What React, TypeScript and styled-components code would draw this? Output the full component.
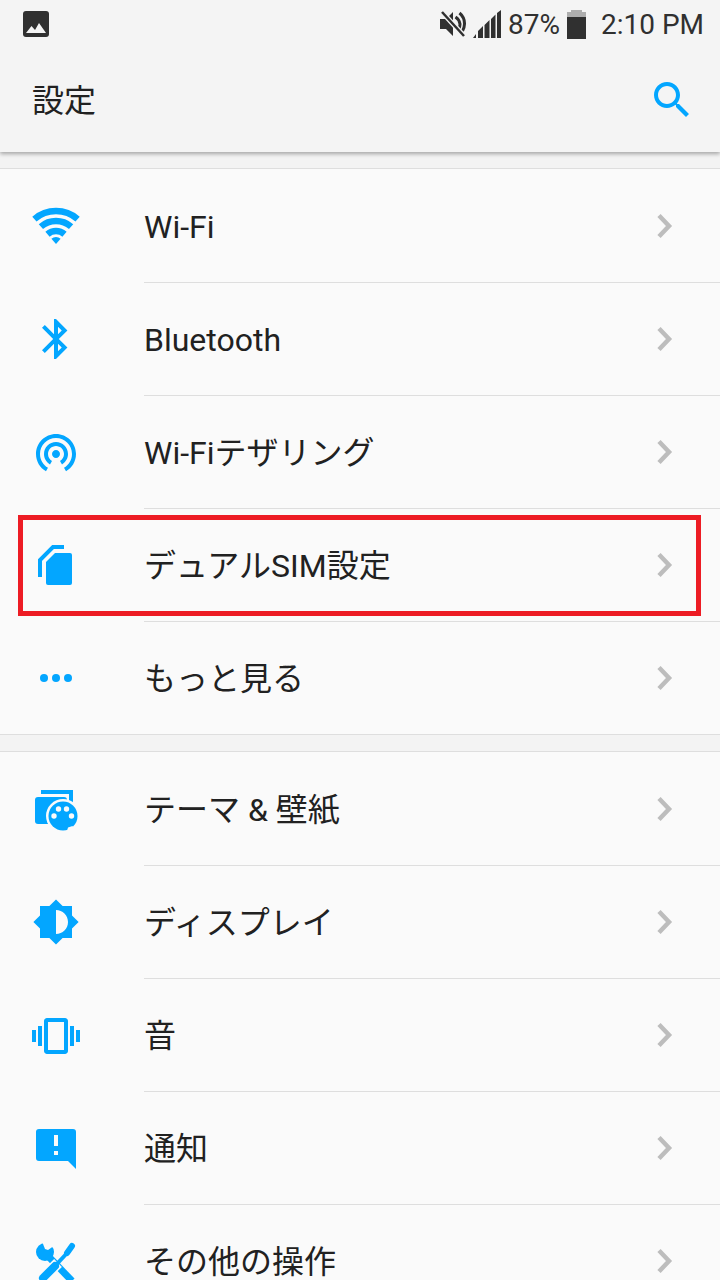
import React from 'react';
import styled, { createGlobalStyle } from 'styled-components';

const accent = '#03a6ff';
const pageBg = '#fafafa';

const GlobalStyle = createGlobalStyle`
  html, body {
    margin:0;
    padding:0;
    background:${pageBg};
  }
  * {
    box-sizing:border-box;
  }
`;

const Page = styled.div`
  width:720px;
  height:1280px;
  overflow:hidden;
  background:#f3f3f3;
  color:#212121;
  font-family:Roboto,"Noto Sans CJK JP",sans-serif;
`;
const Header = styled.header`
  position:relative;
  height:152px;
  background:#f4f4f4;
  box-shadow:0 2px 4px rgba(0,0,0,0.32);
`;
const StatusBar = styled.div`
  display:flex;
  align-items:center;
  height:48px;
  padding:0 16px 0 23px;
  color:#303030;
  font-size:28px;
`;
const StatusRight = styled.div`
  display:flex;
  align-items:center;
  margin-left:auto;
`;
const StatusText = styled.span<{ $left: number }>`
  margin-left:${p => p.$left}px;
  padding-top:2px;
  line-height:46px;
`;
const StatusIcon = styled.svg<{ $left?: number }>`
  display:block;
  margin-left:${p => p.$left || 0}px;
`;
const AppBar = styled.div`
  display:flex;
  align-items:center;
  justify-content:space-between;
  height:104px;
  padding:0 24px 0 32px;
`;
const Title = styled.h1`
  margin:0;
  padding-top:2px;
  font-size:32px;
  font-weight:400;
  line-height:40px;
`;
const Section = styled.section`
  margin-top:16px;
  padding-top:1px;
  background:${pageBg};
  border-top:1px solid #dedede;
  border-bottom:1px solid #dedede;
`;
const Row = styled.div`
  position:relative;
  display:flex;
  height:113px;
  &:last-child{
    height:112px;
  }
`;
const IconCell = styled.div`
  flex:0 0 144px;
  height:112px;
  display:flex;
  align-items:center;
  padding-left:32px;
`;
const RowBody = styled.div`
  flex:1;
  display:flex;
  align-items:center;
  justify-content:space-between;
  padding:0 47px 0 0;
  border-bottom:1px solid #dedede;
  ${Row}:last-child & {
    border-bottom:none;
  }
`;
const Label = styled.span`
  padding-top:2px;
  font-size:32px;
  line-height:40px;
`;
const Highlight = styled.div`
  position:absolute;
  left:18px;
  top:6px;
  width:683px;
  height:101px;
  border:5px solid #ed1c24;
`;

const Glyph = ({ children }: { children: React.ReactNode }) => (
  <svg width="48" height="48" viewBox="0 0 48 48" fill={accent}>{children}</svg>
);

const WifiIcon = () => (
  <Glyph>
    <g fill="none" stroke={accent} strokeWidth="6.500">
      <path d="M2.400 17.100A33 33 0 0 1 45.600 17.100" />
      <path d="M8.900 24.600A23 23 0 0 1 39.100 24.600" />
      <path d="M15.500 32.200A13 13 0 0 1 32.500 32.200" />
    </g>
    <path d="M24 42L19.400 36.700A7 7 0 0 1 28.600 36.700z" />
  </Glyph>
);
const BluetoothIcon = () => (
  <Glyph>
    <path transform="scale(2)" d="M17.710 7.710L12 2h-1v7.590L6.410 5 5 6.410 10.590 12 5 17.590 6.410 19 11 14.410V22h1l5.710-5.710-4.300-4.290 4.300-4.290zM13 5.830l1.880 1.880L13 9.590V5.830zm1.880 10.460L13 18.170v-3.760l1.880 1.880z" />
  </Glyph>
);
const TetherIcon = () => (
  <Glyph>
    <path transform="scale(2)" d="M12 11c-1.100 0-2 .9-2 2s.9 2 2 2 2-.9 2-2-.9-2-2-2zm6 2c0-3.310-2.690-6-6-6s-6 2.690-6 6c0 2.220 1.210 4.150 3 5.190l1-1.740c-1.190-.7-2-1.970-2-3.450 0-2.210 1.790-4 4-4s4 1.790 4 4c0 1.480-.81 2.750-2 3.450l1 1.740c1.790-1.040 3-2.970 3-5.190zM12 3C6.480 3 2 7.480 2 13c0 3.700 2.010 6.920 4.990 8.650l1-1.730C5.610 18.530 4 15.960 4 13c0-4.420 3.580-8 8-8s8 3.580 8 8c0 2.960-1.610 5.530-4 6.920l1 1.730c2.990-1.730 5-4.950 5-8.650 0-5.520-4.480-10-10-10z" />
  </Glyph>
);
const SimIcon = () => (
  <Glyph>
    <path d="M23 12h15a2 2 0 0 1 2 2v28a2 2 0 0 1-2 2H16a2 2 0 0 1-2-2V21z" />
    <path d="M8 36V19L21 6h11" fill="none" stroke={accent} strokeWidth="4" />
  </Glyph>
);
const MoreIcon = () => (
  <Glyph>
    <circle cx="12" cy="24" r="4" />
    <circle cx="24" cy="24" r="4" />
    <circle cx="36" cy="24" r="4" />
  </Glyph>
);
const ThemeIcon = () => (
  <Glyph>
    <path d="M9 7h30v11" fill="none" stroke={accent} strokeWidth="4" />
    <rect x="3" y="12" width="32" height="27" rx="3" />
    <circle cx="31" cy="31" r="17" fill={pageBg} />
    <circle cx="31" cy="31" r="14.500" />
    <path d="M35 46l1-3.500 4.500-1.500 3 5z" fill={pageBg} />
    <g fill={pageBg}>
      <circle cx="22" cy="31" r="2.700" />
      <circle cx="26.500" cy="24" r="2.700" />
      <circle cx="34.500" cy="24" r="2.700" />
      <circle cx="39.500" cy="31" r="2.700" />
    </g>
  </Glyph>
);
const DisplayIcon = () => (
  <Glyph>
    <path transform="scale(2)" d="M20 15.310L23.310 12 20 8.690V4h-4.690L12 .69 8.690 4H4v4.690L.69 12 4 15.310V20h4.690L12 23.310 15.310 20H20v-4.690zM12 18V6c3.310 0 6 2.690 6 6s-2.690 6-6 6z" />
  </Glyph>
);
const SoundIcon = () => (
  <Glyph>
    <path transform="translate(0 1) scale(2)" d="M0 15h2V9H0v6zm3 2h2V7H3v10zm19-8v6h2V9h-2zm-3 8h2V7h-2v10zM16.500 3h-9C6.670 3 6 3.670 6 4.500v15c0 .83.67 1.500 1.500 1.500h9c.83 0 1.500-.67 1.500-1.500v-15c0-.83-.67-1.500-1.500-1.500zM16 19H8V5h8v14z" />
  </Glyph>
);
const NoticeIcon = () => (
  <Glyph>
    <path fillRule="evenodd" d="M7 5h34a3 3 0 0 1 3 3v37l-8-8H7a3 3 0 0 1-3-3V8a3 3 0 0 1 3-3zm15 6v11h4V11zm0 16v4h4v-4z" />
  </Glyph>
);
// crossed wrench and screwdriver, the screwdriver lying on top
const ToolsIcon = () => (
  <Glyph>
    <circle cx="13" cy="15" r="9" />
    <path d="M9.500 3l3.500 9 3 1 5-3.500 1-7z" fill={pageBg} />
    <path d="M16 19l24 25" fill="none" stroke={accent} strokeWidth="7" />
    <path d="M15 37l11-11" fill="none" stroke={pageBg} strokeWidth="11" />
    <path d="M11 41l12-12" fill="none" stroke={accent} strokeWidth="8" strokeLinecap="round" />
    <path d="M23 29L37 14" fill="none" stroke={accent} strokeWidth="4" />
    <path d="M35 16l5-7" fill="none" stroke={accent} strokeWidth="6" strokeLinecap="round" />
  </Glyph>
);

const Chevron = () => (
  <svg width="16" height="28" viewBox="0 0 16 28" fill="none" stroke="#bdbdbd" strokeWidth="4.500">
    <path d="M2 3.500L12 14 2 24.500" />
  </svg>
);

const SearchIcon = () => (
  <svg width="48" height="48" viewBox="0 0 24 24" fill={accent}>
    <path d="M15.500 14h-.79l-.28-.27C15.410 12.590 16 11.110 16 9.500 16 5.910 13.090 3 9.500 3S3 5.910 3 9.500 5.910 16 9.500 16c1.610 0 3.090-.59 4.230-1.570l.27.28v.79l5 4.990L20.490 19l-4.990-5zm-6 0C7.010 14 5 11.990 5 9.500S7.010 5 9.500 5 14 7.010 14 9.500 11.990 14 9.500 14z" />
  </svg>
);

const connectivity = [
  { label: 'Wi-Fi', icon: <WifiIcon /> },
  { label: 'Bluetooth', icon: <BluetoothIcon /> },
  { label: 'Wi-Fiテザリング', icon: <TetherIcon /> },
  { label: 'デュアルSIM設定', icon: <SimIcon />, marked: true },
  { label: 'もっと見る', icon: <MoreIcon /> },
];
const device = [
  { label: 'テーマ & 壁紙', icon: <ThemeIcon /> },
  { label: 'ディスプレイ', icon: <DisplayIcon /> },
  { label: '音', icon: <SoundIcon /> },
  { label: '通知', icon: <NoticeIcon /> },
  { label: 'その他の操作', icon: <ToolsIcon /> },
];

type Item = { label: string; icon: React.ReactNode; marked?: boolean };

function SettingsList({ items }: { items: Item[] }) {
  return (
    <Section>
      {items.map(item => (
        <Row key={item.label}>
          <IconCell>{item.icon}</IconCell>
          <RowBody>
            <Label>{item.label}</Label>
            <Chevron />
          </RowBody>
          {item.marked && <Highlight />}
        </Row>
      ))}
    </Section>
  );
}

function App() {
  return (
    <Page>
      <GlobalStyle />
      <Header>
        <StatusBar>
          <StatusIcon width="26" height="26" viewBox="0 0 26 26">
            <rect width="26" height="26" rx="3" fill="#303030" />
            <path d="M3 22l5.500-7 3.500 4 4-7 7 10z" fill="#f4f4f4" />
          </StatusIcon>
          <StatusRight>
            <StatusIcon width="26" height="26" viewBox="0 0 26 26" fill="#303030">
              <path d="M0 8h6l7-7v24l-7-7H0z" />
              <path d="M15.500 6a10 10 0 0 1 4.500 7 10 10 0 0 1-1.500 5.500M19.500 2a14 14 0 0 1 5 11 14 14 0 0 1-2 7" fill="none" stroke="#303030" strokeWidth="3" />
              <path d="M2 1l22 24" stroke="#f4f4f4" strokeWidth="5" />
              <path d="M2 1l22 24" stroke="#303030" strokeWidth="2.500" />
            </StatusIcon>
            <StatusIcon $left={7} width="29" height="28" viewBox="0 0 29 28" fill="#303030">
              <path d="M0 28l3-4v4zM5 28v-7l5-5v12zM11.500 28v-13l5-5v18zM18 28v-19l4.500-4.500v23.500zM24 28v-25l4-3v28z" />
            </StatusIcon>
            <StatusText $left={6}>87%</StatusText>
            <StatusIcon $left={7} width="19" height="29" viewBox="0 0 19 29">
              <path d="M4 0h11v2h4v6H0V2h4z" fill="#adadad" />
              <rect y="7" width="19" height="22" fill="#303030" />
            </StatusIcon>
            <StatusText $left={15}>2:10 PM</StatusText>
          </StatusRight>
        </StatusBar>
        <AppBar>
          <Title>設定</Title>
          <SearchIcon />
        </AppBar>
      </Header>
      <SettingsList items={connectivity} />
      <SettingsList items={device} />
    </Page>
  );
}

export default App;
